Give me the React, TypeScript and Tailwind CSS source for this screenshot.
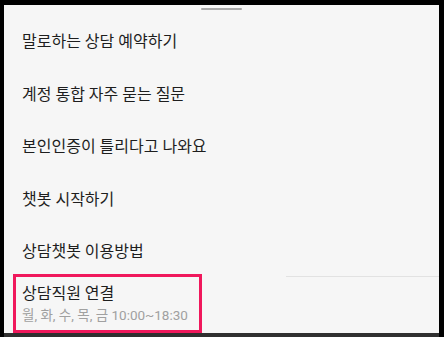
const menuItems = [
  '말로하는 상담 예약하기',
  '계정 통합 자주 묻는 질문',
  '본인인증이 틀리다고 나와요',
  '챗봇 시작하기',
  '상담챗봇 이용방법',
];

export default function App() {
  return (
    <div
      className="w-[444px] h-[337px] bg-black pt-[5px] pl-[4px] pr-[5px] overflow-hidden"
      style={{ fontFamily: 'Roboto, "Noto Sans CJK KR", sans-serif' }}
    >
      <div className="flex flex-col h-full bg-[#f6f6f6]">
        {/* drag handle */}
        <div className="mx-auto mt-[3px] mb-[1px] h-[2px] w-[41px] rounded-full bg-[#a9a9a9]" />

        {menuItems.map((label) => (
          <div key={label} className="h-[52.5px] pl-[18px] pt-[21px]">
            <p className="text-[16px] leading-[20px] text-[#1e1e1e]">{label}</p>
          </div>
        ))}

        <div className="flex">
          <div className="ml-[9px] h-[59px] w-[189px] border-[3px] border-[#f0185c] pl-[6px] pt-[7px]">
            <p className="text-[16px] leading-[20px] text-[#1e1e1e]">상담직원 연결</p>
            <p className="mt-[2px] text-[13.5px] leading-[18px] text-[#a0a0a0]">
              월, 화, 수, 목, 금 10:00~18:30
            </p>
          </div>
          <div className="flex-1 pl-[84px] pt-[2px]">
            <div className="h-px bg-[#e2e2e2]" />
          </div>
        </div>

        <div className="h-[4px] bg-[#303030]" />
      </div>
    </div>
  );
}
